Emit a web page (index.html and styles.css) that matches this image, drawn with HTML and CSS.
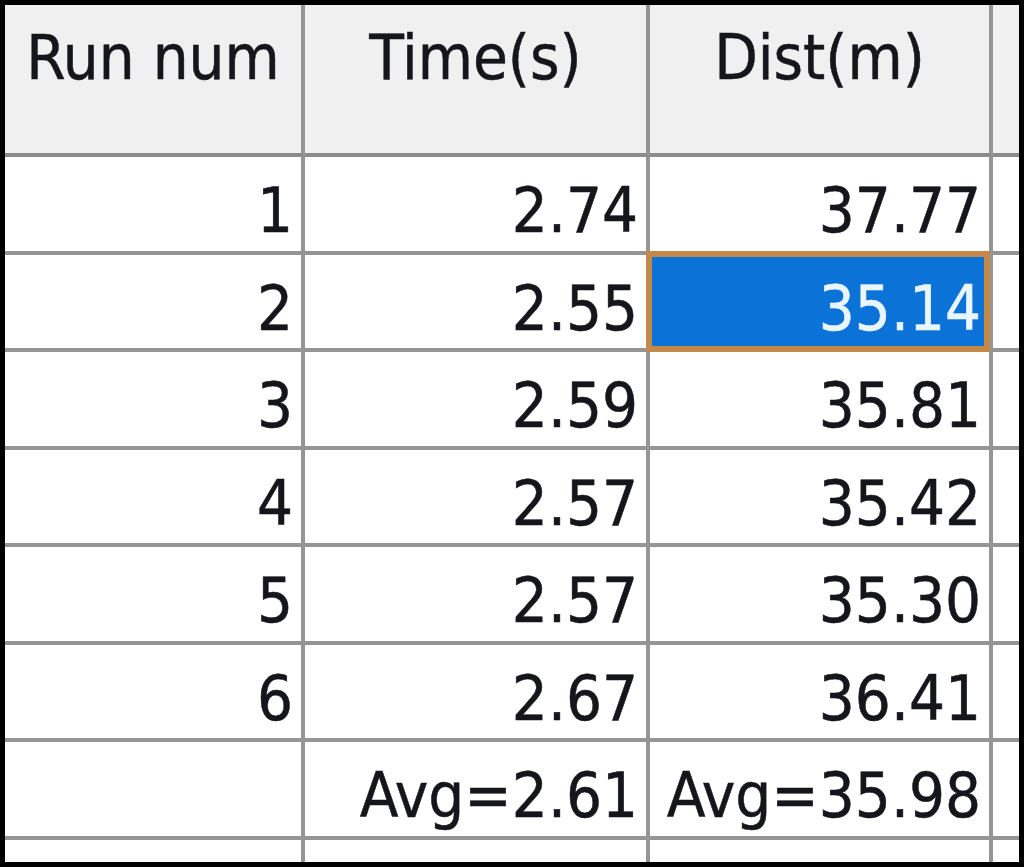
FILE: index.html
```html
<!DOCTYPE html>
<html lang="en">
<head>
<meta charset="utf-8">
<title>Runs</title>
<link rel="stylesheet" href="styles.css">
</head>
<body>
<div class="frame">
  <div class="sheet" role="table">
    <div class="cell head" role="columnheader">Run num</div>
    <div class="cell head" role="columnheader">Time(s)</div>
    <div class="cell head" role="columnheader">Dist(m)</div>
    <div class="cell head edge" role="columnheader"></div>

    <div class="cell">1</div><div class="cell">2.74</div><div class="cell">37.77</div><div class="cell edge"></div>
    <div class="cell">2</div><div class="cell">2.55</div><div class="cell selected">35.14</div><div class="cell edge"></div>
    <div class="cell">3</div><div class="cell">2.59</div><div class="cell">35.81</div><div class="cell edge"></div>
    <div class="cell">4</div><div class="cell">2.57</div><div class="cell">35.42</div><div class="cell edge"></div>
    <div class="cell">5</div><div class="cell">2.57</div><div class="cell">35.30</div><div class="cell edge"></div>
    <div class="cell">6</div><div class="cell">2.67</div><div class="cell">36.41</div><div class="cell edge"></div>
    <div class="cell"></div><div class="cell">Avg=2.61</div><div class="cell">Avg=35.98</div><div class="cell edge"></div>
    <div class="cell"></div><div class="cell"></div><div class="cell"></div><div class="cell edge"></div>
  </div>
</div>
</body>
</html>
```

FILE: styles.css
```css
html, body {
  margin: 0;
  padding: 0;
  background: #000;
}

.frame {
  width: 1024px;
  height: 867px;
  box-sizing: border-box;
  padding: 5px;
  background: #000;
}

.sheet {
  width: 1014px;
  height: 857px;
  overflow: hidden;
  background: #fff;
  display: grid;
  grid-template-columns: 300px 345px 343px 1fr;
  grid-template-rows: 152px repeat(7, 97.5px) 60px;
  font-family: "DejaVu Sans Condensed", "DejaVu Sans", sans-serif;
  font-stretch: condensed;
  font-size: 63px;
  line-height: 64px;
  color: #15151c;
  -webkit-text-stroke: 0.5px currentColor;
}

.cell {
  box-sizing: border-box;
  border-right: 4px solid #959595;
  border-bottom: 4px solid #959595;
  text-align: right;
  padding: 22px 8px 0 0;
  white-space: nowrap;
  position: relative;
}

.head {
  background: #f0f0f0;
  text-align: center;
  padding: 21px 0 0 0;
  border-bottom-color: #8c8c8c;
}

.edge {
  border-right: none;
}

.selected {
  background: #0b72d8;
  color: #eaf6ff;
}

.selected::after {
  content: "";
  position: absolute;
  top: -4px;
  left: -4px;
  right: -1px;
  bottom: -4px;
  border: 6px solid #c48848;
}
```
